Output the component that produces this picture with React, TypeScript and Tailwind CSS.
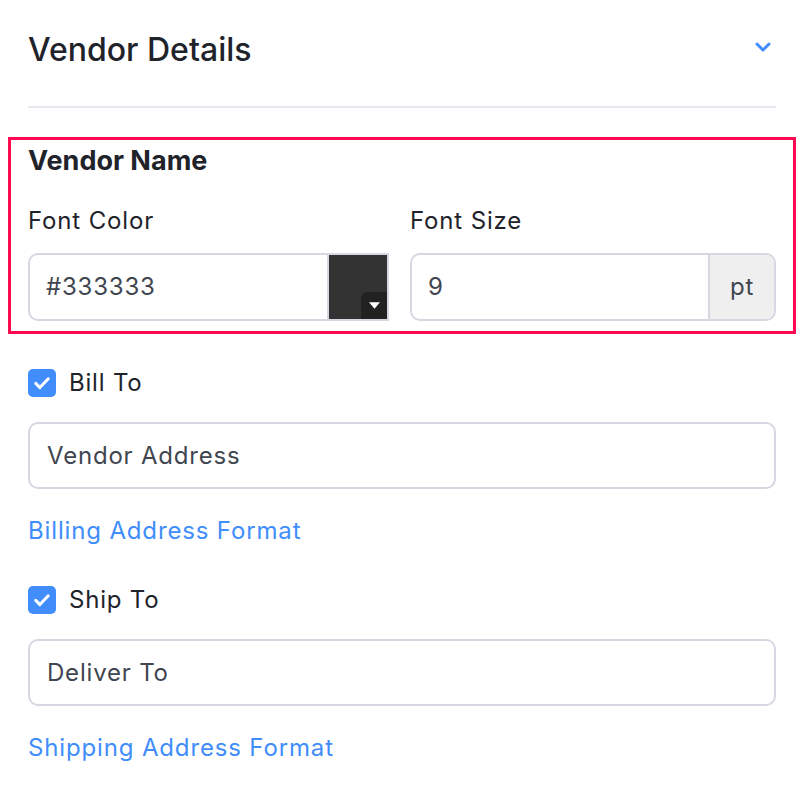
import React from "react";

function Check() {
  return (
    <span className="flex h-[28px] w-[28px] items-center justify-center rounded-[5px] bg-[#408dfb]">
      <svg width="20" height="20" viewBox="0 0 24 24" fill="none">
        <path d="M4.5 12.5l5 5L19.5 7" stroke="#fff" strokeWidth="3.6" strokeLinecap="round" strokeLinejoin="round" />
      </svg>
    </span>
  );
}

function Section({ label, value, link }: { label: string; value: string; link: string }) {
  return (
    <div className="flex flex-col">
      <label className="flex items-center gap-[13px]">
        <Check />
        <span className="text-[24px] leading-[30px] tracking-[0.8px] text-[#21232b]">{label}</span>
      </label>
      <div className="mt-[24px] flex h-[67px] items-center rounded-[10px] border-2 border-[#d7d7e1] px-[17px] text-[24px] tracking-[0.8px] text-[#3f4650]">
        {value}
      </div>
      <a className="mt-[27px] text-[24px] leading-[30px] tracking-[0.85px] text-[#408dfb]">{link}</a>
    </div>
  );
}

export default function App() {
  return (
    <div className="h-[788px] w-[804px] bg-white font-['Inter',sans-serif]">
      <div className="px-[28px] pt-[28px]">
        <div className="flex items-center justify-between border-b-2 border-[#e8e8ee] pb-[34px]">
          <h1 className="text-[32px] font-medium leading-[44px] text-[#21232b]">Vendor Details</h1>
          <svg width="18" height="12" viewBox="0 0 18 12" className="mr-[4px] mt-[-6px]">
            <path d="M3 3l6 6 6-6" stroke="#408dfb" strokeWidth="3" fill="none" strokeLinecap="round" strokeLinejoin="round" />
          </svg>
        </div>
      </div>

      <div className="mx-[8px] mt-[29px] border-[3px] border-[#ff0a50] px-[17px] pb-[10px] pt-[6px]">
        <h2 className="text-[27px] font-bold leading-[30px] text-[#21232b]">Vendor Name</h2>
        <div className="mt-[30px] grid grid-cols-[361px_366px] gap-[21px]">
          <div>
            <div className="text-[24px] leading-[30px] tracking-[0.85px] text-[#21232b]">Font Color</div>
            <div className="mt-[17px] flex h-[68px] overflow-hidden rounded-l-[10px] border-2 border-[#d7d7e1]">
              <div className="flex flex-1 items-center px-[16px] text-[24px] tracking-[0.8px] text-[#3f4650]">#333333</div>
              <div className="relative w-[60px] border-l-2 border-[#d7d7e1] bg-[#333333]">
                <span className="absolute bottom-0 right-0 flex h-[27px] w-[26px] items-center justify-center rounded-tl-[6px] bg-[#222222]">
                  <svg width="11" height="7" viewBox="0 0 10 6">
                    <path d="M0 0h10L5 6z" fill="#fff" />
                  </svg>
                </span>
              </div>
            </div>
          </div>
          <div>
            <div className="text-[24px] leading-[30px] tracking-[0.85px] text-[#21232b]">Font Size</div>
            <div className="mt-[17px] flex h-[68px] overflow-hidden rounded-[10px] border-2 border-[#d7d7e1]">
              <div className="flex flex-1 items-center px-[16px] text-[24px] text-[#3f4650]">9</div>
              <div className="flex w-[66px] items-center justify-center border-l-2 border-[#d7d7e1] bg-[#efefef] text-[24px] tracking-[0.8px] text-[#3f4650]">
                pt
              </div>
            </div>
          </div>
        </div>
      </div>

      <div className="flex flex-col gap-[39px] px-[28px] pt-[34px]">
        <Section label="Bill To" value="Vendor Address" link="Billing Address Format" />
        <Section label="Ship To" value="Deliver To" link="Shipping Address Format" />
      </div>
    </div>
  );
}
